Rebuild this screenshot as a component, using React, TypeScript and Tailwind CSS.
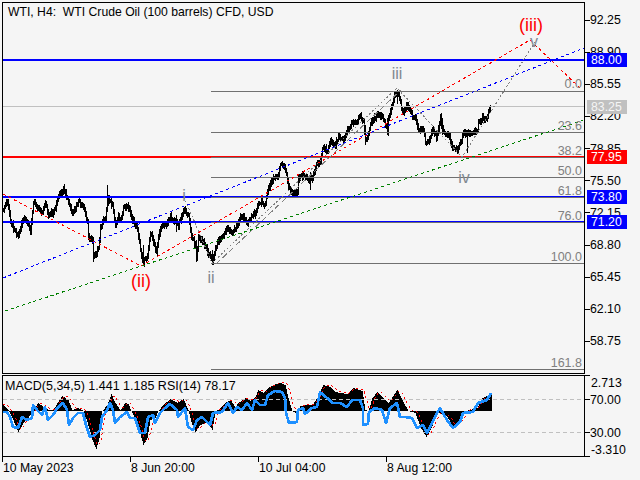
import React from 'react';

type Pt = [number, number];

const pricePts: Pt[] = [
  [3, 210], [6, 202], [8, 207], [10, 220], [13, 228], [18, 235], [22, 220], [25, 220], [30, 230], [33, 203], [38, 207],
  [42, 212], [45, 202], [48, 217], [53, 212], [58, 198], [63, 190], [68, 202], [72, 215], [78, 202], [83, 207],
  [87, 223], [88, 237], [92, 240], [93, 256], [98, 250], [100, 228], [105, 217], [108, 197], [112, 207], [115, 226],
  [118, 215], [120, 220], [123, 208], [128, 207], [132, 220], [137, 228], [140, 250], [143, 263], [147, 255], [150, 233],
  [153, 242], [156, 250], [160, 228], [165, 225], [170, 217], [175, 222], [178, 225], [183, 210], [188, 215], [191, 237],
  [195, 245], [196, 258], [198, 238], [203, 242], [208, 253], [212, 260], [217, 242], [222, 237], [227, 228], [232, 233],
  [237, 225], [240, 216], [247, 222], [253, 215], [256, 208], [260, 203], [265, 203], [268, 188], [273, 178], [278, 175],
  [280, 165], [285, 168], [288, 187], [292, 193], [297, 193], [298, 178], [303, 175], [308, 180], [312, 178], [315, 167],
  [320, 160], [322, 147], [327, 150], [330, 140], [335, 145], [338, 135], [343, 140], [346, 133], [352, 122], [355, 123],
  [360, 116], [363, 123], [365, 141], [367, 138], [370, 122], [375, 117], [378, 113], [382, 118], [387, 130], [388, 117],
  [392, 105], [394, 97], [398, 92], [401, 108], [403, 112], [407, 105], [412, 117], [415, 117], [418, 130], [423, 130],
  [425, 143], [428, 140], [433, 130], [436, 138], [440, 118], [442, 130], [448, 135], [452, 147], [457, 150], [460, 143],
  [463, 132], [467, 134], [470, 132], [477, 130], [478, 122], [483, 118], [487, 117], [489, 108], [490, 106],
];

const spikes: number[][] = [
  [107, 185, 205], [93, 240, 262], [196, 240, 262], [143, 245, 266], [212, 250, 263], [467, 130, 153], [365, 125, 145],
  [387, 118, 135], [442, 118, 135], [397, 90, 104], [176, 215, 232], [310, 172, 190],
];

const histPts: Pt[] = [
  [3, 405], [8, 410], [12, 418], [18, 432], [23, 423], [28, 418], [33, 410], [38, 403], [43, 407], [48, 410], [53, 410],
  [57, 403], [62, 396], [68, 400], [72, 410], [78, 408], [83, 411], [87, 422], [92, 440], [96, 449], [99, 438], [102, 411],
  [107, 405], [111, 394], [115, 403], [120, 410], [125, 403], [128, 404], [132, 413], [137, 423], [143, 445], [147, 438],
  [150, 420], [155, 418], [158, 411], [163, 405], [170, 399], [177, 403], [183, 399], [188, 410], [191, 422], [195, 432],
  [200, 425], [207, 422], [212, 430], [215, 412], [220, 408], [225, 403], [230, 400], [235, 407], [238, 403], [245, 398],
  [250, 401], [255, 397], [258, 390], [263, 393], [268, 388], [273, 385], [280, 383], [285, 385], [288, 398], [292, 411],
  [297, 414], [300, 406], [307, 405], [312, 405], [317, 398], [323, 385], [330, 387], [335, 392], [340, 393], [347, 394],
  [353, 388], [362, 391], [365, 410], [368, 411], [372, 398], [377, 392], [382, 397], [388, 403], [397, 390], [402, 400],
  [408, 411], [415, 413], [420, 427], [426, 437], [430, 430], [438, 412], [447, 417], [453, 427], [460, 422], [465, 411],
  [477, 408], [482, 398], [488, 395], [491, 393],
];

const rsiPts: Pt[] = [
  [3, 412], [7, 412], [10, 417], [13, 427], [18, 428], [22, 417], [27, 420], [32, 418], [33, 405], [37, 410], [42, 415],
  [45, 407], [48, 420], [53, 415], [58, 407], [63, 403], [67, 410], [69, 425], [73, 418], [78, 413], [83, 413], [86, 425],
  [90, 437], [95, 435], [100, 430], [102, 417], [107, 410], [110, 403], [113, 410], [115, 423], [120, 417], [127, 412],
  [130, 418], [135, 418], [140, 433], [145, 433], [148, 417], [153, 415], [155, 423], [160, 413], [165, 408], [170, 404],
  [177, 410], [178, 417], [185, 408], [188, 427], [193, 430], [197, 420], [202, 417], [207, 422], [210, 425], [213, 413],
  [222, 412], [228, 403], [233, 413], [237, 407], [242, 410], [247, 403], [252, 410], [255, 400], [260, 405], [265, 405],
  [268, 395], [275, 391], [282, 392], [285, 398], [286, 413], [289, 423], [297, 422], [298, 410], [303, 408], [305, 414],
  [312, 408], [317, 407], [320, 392], [327, 398], [333, 403], [340, 403], [347, 407], [352, 400], [360, 400], [363, 408],
  [363, 425], [368, 424], [369, 412], [375, 408], [382, 410], [386, 423], [390, 408], [397, 403], [400, 417], [405, 417],
  [412, 418], [417, 428], [423, 425], [427, 433], [432, 423], [437, 413], [440, 408], [447, 420], [453, 428], [460, 422],
  [463, 413], [473, 412], [478, 403], [487, 400], [491, 393],
];

const priceTicks = ['92.25', '88.90', '85.55', '82.20', '78.85', '75.50', '72.15', '68.80', '65.45', '62.10', '58.75'];

const priceTags = [
  ['88.00', 53, 'bg-[#0000ff] text-white'],
  ['83.25', 100, 'bg-[#c0c0c0] text-[#f5f5f5]'],
  ['77.95', 150, 'bg-[#ff0000] text-white'],
  ['73.80', 190, 'bg-[#0000ff] text-white'],
  ['71.20', 215, 'bg-[#0000ff] text-white'],
] as const;

const fibLevels: [string, number, number][] = [
  ['0.0', 91, 83], ['23.6', 132, 125], ['38.2', 157, 150], ['50.0', 177, 170],
  ['61.8', 197, 190], ['76.0', 222, 215], ['100.0', 263, 256], ['161.8', 369, 362],
];

const timeLabels = ['10 May 2023', '8 Jun 20:00', '10 Jul 04:00', '8 Aug 12:00'];

function interp(pts: Pt[], x: number) {
  for (let i = 1; i < pts.length; i++) {
    if (x <= pts[i][0]) {
      const [x0, y0] = pts[i - 1];
      const [x1, y1] = pts[i];
      if (x1 === x0) return y1;
      return y0 + ((y1 - y0) * (x - x0)) / (x1 - x0);
    }
  }
  return pts[pts.length - 1][1];
}

// small repeatable noise so the bars look like real ticks
function noise(i: number) {
  const s = Math.sin(i * 12.9898) * 43758.5453;
  return s - Math.floor(s);
}

function buildPricePath() {
  let d = '';
  let prev = interp(pricePts, 3);
  for (let x = 3; x <= 490; x++) {
    const y = interp(pricePts, x) + (noise(x) - 0.5) * 4;
    const top = Math.min(y, prev) - 1.5 - noise(x + 500) * 2.5;
    const bottom = Math.max(y, prev) + 1.5 + noise(x + 900) * 2.5;
    d += 'M' + (x + 0.5) + ' ' + top.toFixed(0) + 'V' + bottom.toFixed(0);
    prev = y;
  }
  for (const [x, a, b] of spikes) d += 'M' + (x + 0.5) + ' ' + a + 'V' + b;
  return d;
}

function buildHistPath() {
  let d = '';
  for (let x = 3; x <= 491; x++) {
    d += 'M' + (x + 0.5) + ' 411V' + interp(histPts, x).toFixed(0);
  }
  return d;
}

function buildSignal() {
  const out: string[] = [];
  for (let x = 3; x <= 491; x++) {
    let sum = 0;
    for (let k = 0; k < 5; k++) sum += interp(histPts, Math.max(3, x - k - 1));
    out.push(x + ',' + (sum / 5 - 1).toFixed(0));
  }
  return out.join(' ');
}

function MainChart() {
  const waveLabel = 'fill-[#808890] text-[16px]';
  return (
    <svg viewBox="3 3 581 370" className="block w-[581px] h-[370px]">
      <path d={buildPricePath()} stroke="#000" strokeWidth={1} fill="none" shapeRendering="crispEdges" />

      <g shapeRendering="crispEdges" fill="none">
        <line x1={3} x2={584} y1={60} y2={60} stroke="#0000ff" strokeWidth={2} />
        <line x1={3} x2={584} y1={106.5} y2={106.5} stroke="#c0c0c0" strokeWidth={1} />
        <line x1={3} x2={584} y1={157} y2={157} stroke="#ff0000" strokeWidth={2} />
        <line x1={3} x2={584} y1={197} y2={197} stroke="#0000ff" strokeWidth={2} />
        <line x1={3} x2={584} y1={222} y2={222} stroke="#0000ff" strokeWidth={2} />
        {fibLevels.map(([name, y]) => (
          <line key={name} x1={211} x2={584} y1={y + 0.5} y2={y + 0.5} stroke="#707070" strokeWidth={1} />
        ))}

        {/* wave lines */}
        <polyline points="184,197 212,263 397,88 462,157 535,42" stroke="#808080" strokeDasharray="2 2" />
        <polyline points="216,264 401,90" stroke="#808080" strokeDasharray="6 3" />
        <polyline points="3,194 141,266 530,40 582,90" stroke="#ff0000" strokeDasharray="3 3" />
        <line x1={3} y1={278} x2={584} y2={48} stroke="#0000ff" strokeDasharray="3 3" />
        <line x1={5} y1={311} x2={584} y2={120} stroke="#008000" strokeDasharray="3 3" />
      </g>

      <g fontFamily="'Liberation Sans', sans-serif">
        {fibLevels.map(([name, , ty]) => (
          <text key={name} x={582} y={ty + 5} textAnchor="end" fontSize={12.5} fill="#808080">{name}</text>
        ))}
        <text x={531} y={31} textAnchor="middle" fontSize={18} fill="#ff0000">(iii)</text>
        <text x={141} y={287} textAnchor="middle" fontSize={18} fill="#ff0000">(ii)</text>
        <text x={397} y={79} textAnchor="middle" className={waveLabel}>iii</text>
        <text x={184} y={201} textAnchor="middle" className={waveLabel}>i</text>
        <text x={211} y={283} textAnchor="middle" className={waveLabel}>ii</text>
        <text x={464} y={183} textAnchor="middle" className={waveLabel}>iv</text>
        <text x={534} y={47} textAnchor="middle" className={waveLabel}>v</text>
      </g>
    </svg>
  );
}

function SubChart() {
  const rsi = rsiPts.map(p => p.join(',')).join(' ');
  return (
    <svg viewBox="3 376 581 80" className="block w-[581px] h-[80px]">
      <g shapeRendering="crispEdges" fill="none">
        <path d={buildHistPath()} stroke="#000" strokeWidth={1} />
        <line x1={3} x2={584} y1={399.5} y2={399.5} stroke="#c0c0c0" strokeDasharray="4 3" />
        <line x1={3} x2={584} y1={432.5} y2={432.5} stroke="#c0c0c0" strokeDasharray="4 3" />
        <polyline points={buildSignal()} stroke="#ff0000" strokeDasharray="2 3" />
        <polyline points={rsi} stroke="#1e90ff" strokeWidth={2.7} strokeLinejoin="round" />
      </g>
    </svg>
  );
}

function Tick() {
  return <span className="w-[5px] h-px bg-black shrink-0" />;
}

function PriceAxis() {
  return (
    <div className="relative flex-1 flex flex-col text-[12.3px] leading-[14px] text-black">
      {/* main window scale */}
      <div className="h-[375px] pt-[4px] flex flex-col">
        {priceTicks.map(label => (
          <div key={label} className="h-[32.15px] flex items-center">
            <Tick />
            <span>{label}</span>
          </div>
        ))}
      </div>
      {/* sub window scale */}
      <div className="flex flex-col">
        <div className="h-[17px] flex items-start">
          <Tick />
          <span className="pl-px pt-px">2.713</span>
        </div>
        <div className="h-[15px] flex items-center">
          <Tick />
          <span>70.00</span>
        </div>
        <div className="h-[15px] mt-[18px] flex items-center">
          <Tick />
          <span>30.00</span>
        </div>
        <div className="h-[14px] mt-[3px] flex items-end">
          <Tick />
          <span className="pl-px">-3.310</span>
        </div>
      </div>
      {/* current levels sit on top of the scale */}
      {priceTags.map(([label, y, cls]) => (
        <div key={label} className={'absolute left-[2px] w-[40px] h-[14px] pl-[4px] ' + cls} style={{ top: y }}>
          {label}
        </div>
      ))}
    </div>
  );
}

export default function App() {
  return (
    <div className="w-[640px] h-[480px] overflow-hidden bg-[#f5f5f5] font-['Liberation_Sans',sans-serif]">
      <div className="flex h-[457px]">
        <div className="w-[585px] pl-[2px] pt-[2px] flex flex-col gap-px shrink-0">
          <div className="relative h-[372px] border border-black">
            <MainChart />
            <div className="absolute left-[5px] top-[2px] text-[12.2px] leading-[14px] text-black whitespace-nowrap">
              WTI, H4:&nbsp; WTI Crude Oil (100 barrels) CFD, USD
            </div>
          </div>
          <div className="relative h-[82px] border border-black">
            <SubChart />
            <div className="absolute left-[2px] top-[3px] text-[12.5px] leading-[14px] text-black whitespace-nowrap">
              MACD(5,34,5) 1.441 1.185 RSI(14) 78.17
            </div>
          </div>
        </div>
        <PriceAxis />
      </div>
      <div className="pl-[2px] grid grid-cols-[128px_128px_128px_128px] text-[12.2px] leading-[14px] text-black">
        {timeLabels.map(label => (
          <div key={label} className="flex items-start">
            <span className="w-px h-[5px] bg-black shrink-0" />
            <span className="pt-[4px] whitespace-nowrap">{label}</span>
          </div>
        ))}
      </div>
    </div>
  );
}
